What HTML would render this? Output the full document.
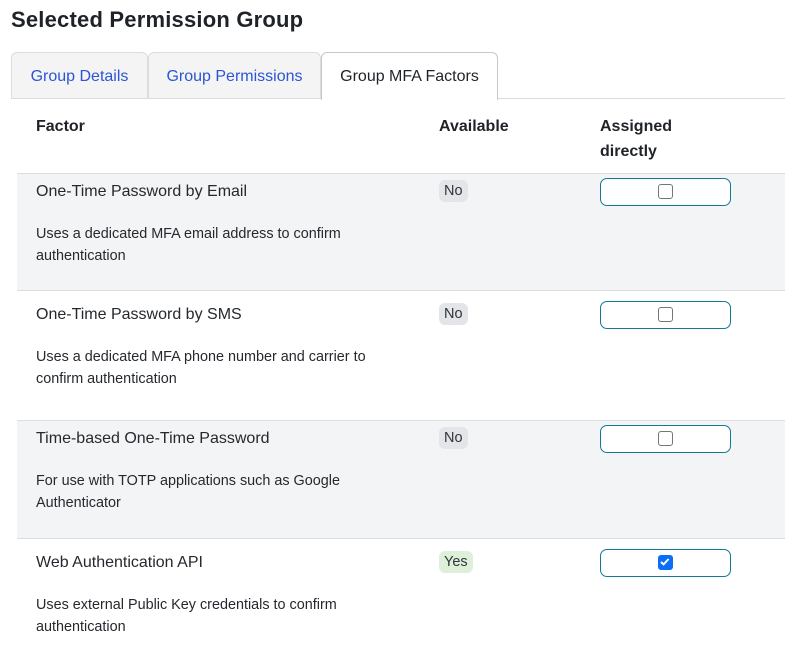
<!DOCTYPE html>
<html><head><meta charset="utf-8"><style>
*{margin:0;padding:0;box-sizing:border-box}
body{width:785px;height:663px;overflow:hidden;background:#fff;font-family:"Liberation Sans",sans-serif;color:#1f2328;position:relative}
.a{position:absolute;white-space:nowrap}
h1{position:absolute;left:11px;top:7px;font-size:22px;font-weight:600;color:#1f2328;letter-spacing:0.2px}
.tab{position:absolute;top:52px;height:47px;border:1px solid #dcdcdc;border-bottom:none;border-radius:6px 6px 0 0;background:#f4f4f4;color:#2b55d4;font-size:16px;line-height:48px;text-align:center}
.tab.act{background:#fff;color:#1f2328;border-color:#c8c8c8;height:48px;z-index:2}
.line{position:absolute;left:11px;right:0;top:98px;height:1px;background:#dcdcdc}
.row{position:absolute;left:17px;right:0;border-top:1px solid #dedede}
.g{background:#f3f4f6}
.th{font-weight:700;font-size:16px}
.t{font-size:16px;color:#25292e}
.d{font-size:14.4px;color:#25292e;line-height:22px;white-space:normal}
.b{position:absolute;height:22px;line-height:23px;border-radius:6px;font-size:14.5px;padding:0 5px;background:#e3e5e8;color:#30353b}
.b.y{background:#dff0da}
.btn{position:absolute;left:600px;width:131px;height:28px;border:1.5px solid #127a95;border-radius:7px;background:#fff}
.cb{position:absolute;left:57px;top:5px;width:15px;height:15px;border:1.5px solid #767676;border-radius:3px;background:#fff}
.cb.on{background:#0b6ef9;border-color:#0b6ef9}
</style></head><body>
<h1>Selected Permission Group</h1>
<div class="tab" style="left:11px;width:137px">Group Details</div>
<div class="tab" style="left:148px;width:173px">Group Permissions</div>
<div class="tab act" style="left:321px;width:177px">Group MFA Factors</div>
<div class="line"></div>

<div class="a th" style="left:36px;top:118px">Factor</div>
<div class="a th" style="left:439px;top:118px">Available</div>
<div class="a th" style="left:600px;line-height:25px;top:114px">Assigned<br>directly</div>

<div class="row g" style="top:173px;height:117px"></div>
<div class="row" style="top:290px;height:130px"></div>
<div class="row g" style="top:420px;height:118px"></div>
<div class="row" style="top:538px;height:125px"></div>

<div class="a t" style="left:36px;top:183px">One-Time Password by Email</div>
<div class="a d" style="left:36px;top:223px">Uses a dedicated MFA email address to confirm<br>authentication</div>
<div class="b" style="left:439px;top:180px">No</div>
<div class="btn" style="top:178px"><div class="cb"></div></div>

<div class="a t" style="left:36px;top:306px">One-Time Password by SMS</div>
<div class="a d" style="left:36px;top:346px">Uses a dedicated MFA phone number and carrier to<br>confirm authentication</div>
<div class="b" style="left:439px;top:303px">No</div>
<div class="btn" style="top:301px"><div class="cb"></div></div>

<div class="a t" style="left:36px;top:430px">Time-based One-Time Password</div>
<div class="a d" style="left:36px;top:470px">For use with TOTP applications such as Google<br>Authenticator</div>
<div class="b" style="left:439px;top:427px">No</div>
<div class="btn" style="top:425px"><div class="cb"></div></div>

<div class="a t" style="left:36px;top:554px">Web Authentication API</div>
<div class="a d" style="left:36px;top:594px">Uses external Public Key credentials to confirm<br>authentication</div>
<div class="b y" style="left:439px;top:551px">Yes</div>
<div class="btn" style="top:549px"><div class="cb on"><svg width="12" height="12" viewBox="0 0 12 12" style="position:absolute;left:0;top:0"><path d="M2 6L4.6 8.4L9.6 3" stroke="#fff" stroke-width="2" fill="none"/></svg></div></div>
</body></html>
